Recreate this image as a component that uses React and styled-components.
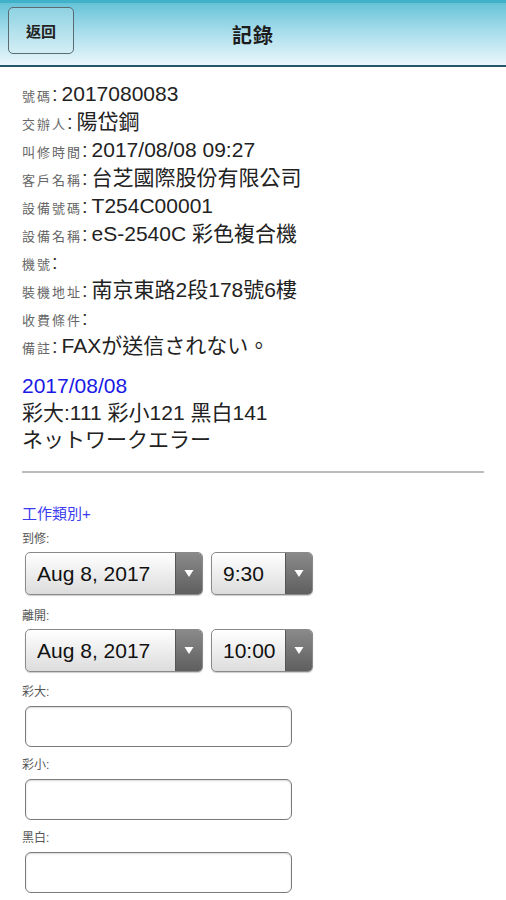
import { createGlobalStyle, styled } from "styled-components";

const GlobalStyle = createGlobalStyle`
  html, body {
    margin: 0;
    padding: 0;
    background: #ffffff;
    font-family: "Liberation Sans", "Noto Sans CJK TC", sans-serif;
    color: #222;
  }
`;

const Page = styled.div`
  width: 506px;
  min-height: 900px;
  background: #fff;
`;

const Header = styled.header`
  position: relative;
  height: 62px;
  border-top: 3px solid #3fb2c9;
  border-bottom: 2px solid #27586a;
  background: linear-gradient(to bottom, #66c3d8 0%, #a6dceb 45%, #eaf7fb 100%);
  display: flex;
  align-items: center;
  justify-content: center;
`;

const BackButton = styled.button`
  position: absolute;
  left: 8px;
  top: 4px;
  width: 66px;
  height: 47px;
  border: 1.5px solid #5b6b72;
  border-radius: 5px;
  background: linear-gradient(to bottom, #8fd2e2, #d3eef5);
  font-family: "Noto Sans CJK TC", sans-serif;
  font-size: 15px;
  font-weight: 700;
  color: #222;
  padding: 0;
`;

const Title = styled.h1`
  margin: 0;
  font-family: "Noto Sans CJK TC", sans-serif;
  font-size: 20px;
  font-weight: 700;
  color: #1c1c1c;
  letter-spacing: 1px;
`;

const Content = styled.main`
  padding: 13px 22px 0 22px;
`;

const InfoRow = styled.div`
  display: flex;
  align-items: baseline;
  height: 28px;
  line-height: 28px;
  white-space: nowrap;
`;

const Label = styled.span`
  font-size: 13px;
  letter-spacing: 2px;
  color: #666;
`;

const Colon = styled.span`
  font-size: 20px;
  color: #333;
  margin-right: 4px;
`;

const Value = styled.span`
  font-size: 21px;
  color: #222;
`;

const Record = styled.div`
  margin-top: ${(p) => (p.$blue ? 12 : 0)}px;
  font-size: 21px;
  line-height: 27px;
  color: ${(p) => (p.$blue ? "#1a1ae6" : "#222")};
`;

const Divider = styled.hr`
  margin: 18px 0 0 0;
  border: none;
  border-top: 2px solid #bcbcbc;
`;

const AddLink = styled.div`
  margin-top: 30px;
  font-size: 15px;
  color: #3a3af0;
  line-height: 22px;
`;

const FieldLabel = styled.div`
  font-size: 12px;
  color: #555;
  line-height: 20px;
  margin-top: ${(p) => p.$mt || 0}px;
`;

const PickerRow = styled.div`
  display: flex;
  gap: 8px;
  margin-top: 3px;
  margin-left: 3px;
`;

const Picker = styled.div`
  width: ${(p) => p.$w}px;
  height: 43px;
  box-sizing: border-box;
  border: 1.5px solid #8a8a8a;
  border-radius: 5px;
  display: flex;
  overflow: hidden;
  background: linear-gradient(to bottom, #ffffff, #dcdcdc);
  box-shadow: 0 1px 1px rgba(0, 0, 0, 0.2);
`;

const PickerText = styled.div`
  flex: 1;
  display: flex;
  align-items: center;
  padding-left: 11px;
  font-size: 21px;
  color: #111;
`;

const PickerArrow = styled.div`
  width: 26px;
  background: linear-gradient(to bottom, #8a8a8a, #5f5f5f);
  border-left: 1px solid #555;
  display: flex;
  align-items: center;
  justify-content: center;
`;

const TextBox = styled.input`
  display: block;
  width: 267px;
  height: 41px;
  box-sizing: border-box;
  margin: 4px 0 0 3px;
  border: 1.5px solid #7a7a7a;
  border-radius: 6px;
  background: #fff;
  box-shadow: inset 0 1px 2px rgba(0, 0, 0, 0.15);
  font-size: 18px;
  outline: none;
`;

const info = [
  ["號碼", "2017080083"],
  ["交辦人", "陽岱鋼"],
  ["叫修時間", "2017/08/08 09:27"],
  ["客戶名稱", "台芝國際股份有限公司"],
  ["設備號碼", "T254C00001"],
  ["設備名稱", "eS-2540C 彩色複合機"],
  ["機號", ""],
  ["裝機地址", "南京東路2段178號6樓"],
  ["收費條件", ""],
  ["備註", "FAXが送信されない。"],
];

const Arrow = () => (
  <svg width="10" height="9" viewBox="0 0 10 9">
    <path d="M0.5 1 L9.5 1 L5 8 Z" fill="#ffffff" />
  </svg>
);

const DateTimePicker = ({ date, time }) => (
  <PickerRow>
    <Picker $w={178}>
      <PickerText>{date}</PickerText>
      <PickerArrow>
        <Arrow />
      </PickerArrow>
    </Picker>
    <Picker $w={102}>
      <PickerText>{time}</PickerText>
      <PickerArrow>
        <Arrow />
      </PickerArrow>
    </Picker>
  </PickerRow>
);

const App = () => {
  return (
    <>
      <GlobalStyle />
      <Page>
        <Header>
          <BackButton>返回</BackButton>
          <Title>記錄</Title>
        </Header>
        <Content>
          {info.map(([label, value]) => (
            <InfoRow key={label}>
              <Label>{label}</Label>
              <Colon>:</Colon>
              <Value>{value}</Value>
            </InfoRow>
          ))}
          <Record $blue>2017/08/08</Record>
          <Record>彩大:111 彩小121 黑白141</Record>
          <Record>ネットワークエラー</Record>
          <Divider />
          <AddLink>工作類別+</AddLink>
          <FieldLabel $mt={4}>到修:</FieldLabel>
          <DateTimePicker date="Aug 8, 2017" time="9:30" />
          <FieldLabel $mt={11}>離開:</FieldLabel>
          <DateTimePicker date="Aug 8, 2017" time="10:00" />
          <FieldLabel $mt={10}>彩大:</FieldLabel>
          <TextBox />
          <FieldLabel $mt={8}>彩小:</FieldLabel>
          <TextBox />
          <FieldLabel $mt={8}>黑白:</FieldLabel>
          <TextBox />
        </Content>
      </Page>
    </>
  );
};

export default App;
